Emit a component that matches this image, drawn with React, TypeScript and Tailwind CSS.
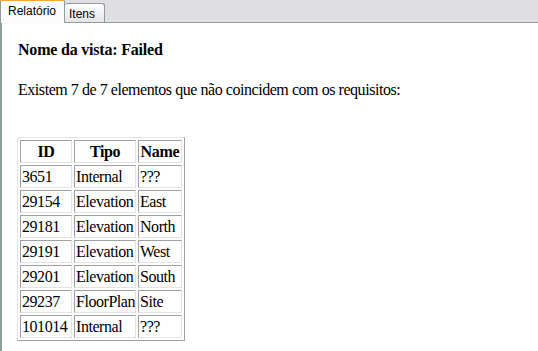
const rows = [
  ['3651', 'Internal', '???'],
  ['29154', 'Elevation', 'East'],
  ['29181', 'Elevation', 'North'],
  ['29191', 'Elevation', 'West'],
  ['29201', 'Elevation', 'South'],
  ['29237', 'FloorPlan', 'Site'],
  ['101014', 'Internal', '???'],
];

const cell =
  'h-[23px] px-px py-0 leading-[19px] whitespace-nowrap overflow-visible border border-t-[#a0a0a0] border-l-[#a0a0a0] border-b-[#e3e3e3] border-r-[#e3e3e3] align-middle';

export default function App() {
  return (
    <div className="w-[538px] h-[351px] overflow-hidden bg-white">
      {/* tab strip */}
      <div className="flex items-end h-[23px] bg-[#dfdfe3] border-b border-[#919b9c] font-['Liberation_Sans',sans-serif] text-[12px] text-black">
        <div className="relative z-10 -mb-px h-[24px] w-[65px] rounded-t-[3px] border-t-[2px] border-t-[#f5a63a] border-x border-x-[#919b9c] bg-[#fcfcfe] pl-[7px] pt-[3px] leading-[14px]">
          Relatório
        </div>
        <div className="h-[19px] w-[40px] rounded-t-[3px] border-t border-r border-[#919b9c] bg-gradient-to-b from-white to-[#e6e6ea] pl-[4px] pt-[3px] leading-[14px]">
          Itens
        </div>
      </div>

      {/* report panel */}
      <div className="h-[328px] border-l-2 border-[#919b9c] bg-white pl-[15px] pt-[18px] font-['Liberation_Serif',serif] text-[16px] text-black">
        <h1 className="pl-px font-bold leading-[18px] tracking-[-0.2px]">Nome da vista: Failed</h1>
        <p className="mt-[22px] pl-px leading-[18px] tracking-[-0.45px]">
          Existem 7 de 7 elementos que não coincidem com os requisitos:
        </p>

        <table className="mt-[38px] w-[168px] table-fixed border-separate border-spacing-[2px] border border-t-[#e3e3e3] border-l-[#e3e3e3] border-b-[#a0a0a0] border-r-[#a0a0a0] tracking-[-0.45px]">
          <thead>
            <tr>
              <th className={`${cell} w-[52px] text-center font-bold`}>ID</th>
              <th className={`${cell} w-[62px] text-center font-bold`}>Tipo</th>
              <th className={`${cell} w-[44px] text-center font-bold tracking-[-0.3px]`}>Name</th>
            </tr>
          </thead>
          <tbody>
            {rows.map((r) => (
              <tr key={r[0]}>
                <td className={`${cell} text-left`}>{r[0]}</td>
                <td className={`${cell} text-left`}>{r[1]}</td>
                <td className={`${cell} text-left`}>{r[2]}</td>
              </tr>
            ))}
          </tbody>
        </table>
      </div>
    </div>
  );
}
